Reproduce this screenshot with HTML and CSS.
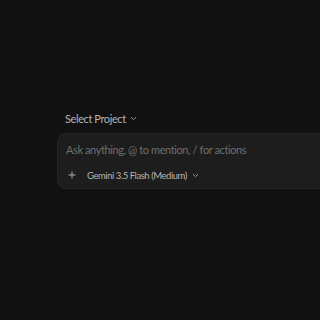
FILE: index.html
```html
<!DOCTYPE html>
<html lang="en">
<head>
    <meta charset="UTF-8">
    <title>New Chat</title>
    <link rel="stylesheet" href="styles.css">
</head>
<body>

<div class="composer">
    <div class="project-select">
        <span>Select Project</span>
        <svg class="chevron" width="7" height="5" viewBox="0 0 7 5"><path d="M1 1.2 L3.5 3.6 L6 1.2" fill="none" stroke="currentColor" stroke-width="1"/></svg>
    </div>
    <div class="input-box">
        <div class="placeholder">Ask anything, @ to mention, / for actions</div>
        <div class="toolbar">
            <svg class="add-btn" width="8" height="8" viewBox="0 0 8 8"><path d="M4 0.5 V7.5 M0.5 4 H7.5" fill="none" stroke="currentColor" stroke-width="1"/></svg>
            <span class="model">Gemini 3.5 Flash (Medium)</span>
            <svg class="chevron" width="7" height="5" viewBox="0 0 7 5"><path d="M1 1.2 L3.5 3.6 L6 1.2" fill="none" stroke="currentColor" stroke-width="1"/></svg>
        </div>
    </div>
</div>

</body>
</html>
```

FILE: styles.css
```css
body {
    margin: 0;
    background-color: #111111;
    font-family: Lato, "Noto Sans", sans-serif;
    height: 320px;
    overflow: hidden;
}
.composer {
    padding: 110px 0 0 57px;
    overflow: hidden;
}
.project-select {
    display: flex;
    align-items: center;
    gap: 4px;
    padding-left: 8px;
    height: 16px;
    color: #b4b4b4;
    font-size: 11px;
    letter-spacing: -0.4px;
}
.project-select .chevron {
    color: #9a9a9a;
}
.input-box {
    margin-top: 7px;
    width: 300px;
    height: 56px;
    background-color: #1d1d1d;
    border: 1px solid #262626;
    border-radius: 9px;
    box-sizing: border-box;
    padding: 8px 0 0 8px;
}
.placeholder {
    color: #6e6e6e;
    font-size: 11px;
    letter-spacing: -0.4px;
    height: 16px;
    line-height: 16px;
}
.toolbar {
    display: flex;
    align-items: center;
    margin-top: 10px;
    height: 14px;
    color: #b4b4b4;
    font-size: 9.5px;
    letter-spacing: -0.45px;
}
.add-btn {
    margin-left: 2px;
    color: #b0b0b0;
}
.model {
    margin-left: 11px;
    margin-right: 5px;
}
.toolbar .chevron {
    color: #9a9a9a;
}
```
